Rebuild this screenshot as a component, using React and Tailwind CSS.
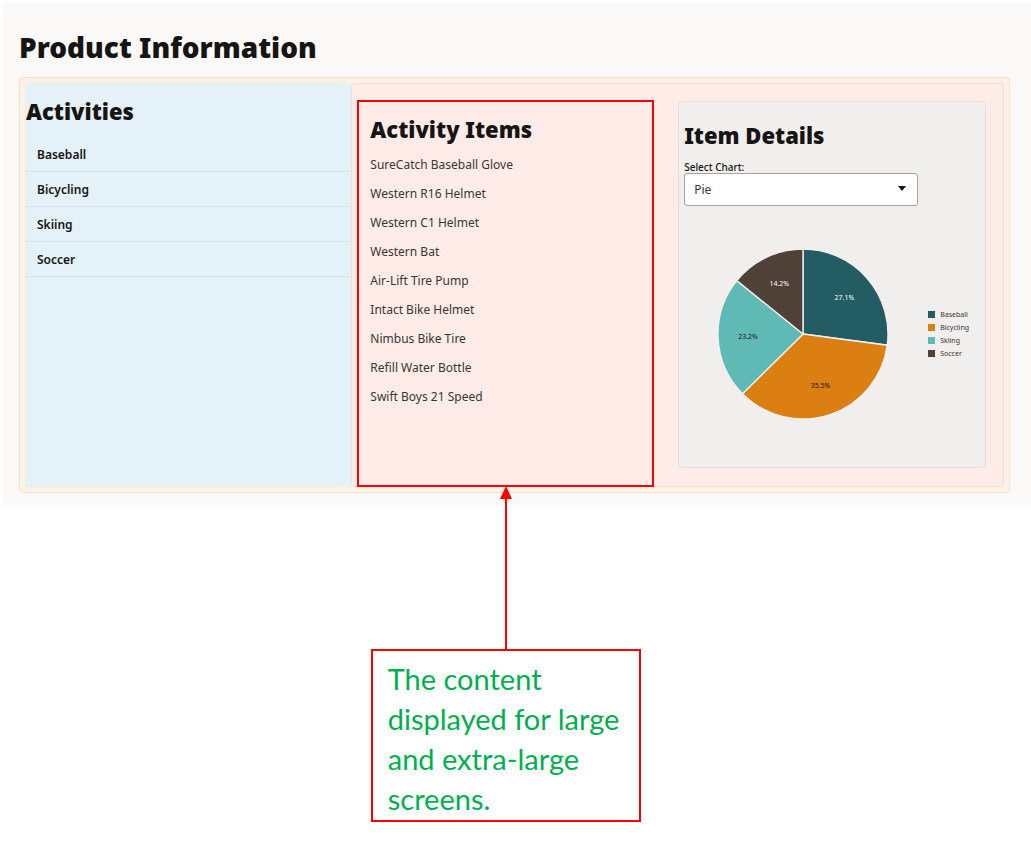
import { useState } from "react";

const activities = ["Baseball", "Bicycling", "Skiing", "Soccer"];

const items = [
  "SureCatch Baseball Glove",
  "Western R16 Helmet",
  "Western C1 Helmet",
  "Western Bat",
  "Air-Lift Tire Pump",
  "Intact Bike Helmet",
  "Nimbus Bike Tire",
  "Refill Water Bottle",
  "Swift Boys 21 Speed",
];

const slices = [
  { name: "Baseball", value: 27.1, color: "#235d63", text: "#ffffff" },
  { name: "Bicycling", value: 35.5, color: "#dc7f12", text: "#161513" },
  { name: "Skiing", value: 23.2, color: "#5fb9b5", text: "#161513" },
  { name: "Soccer", value: 14.2, color: "#4f4137", text: "#ffffff" },
];

const R = 85;

function point(percent, radius) {
  const angle = (percent / 100) * 2 * Math.PI;
  return [R + radius * Math.sin(angle), R - radius * Math.cos(angle)];
}

function PieChart() {
  let start = 0;
  const parts = slices.map((slice) => {
    const from = start;
    start += slice.value;
    const [x1, y1] = point(from, R);
    const [x2, y2] = point(start, R);
    const [tx, ty] = point(from + slice.value / 2, 55);
    return { ...slice, tx, ty, d: `M${R} ${R} L${x1} ${y1} A${R} ${R} 0 0 1 ${x2} ${y2} Z` };
  });

  return (
    <svg className="size-[170px] shrink-0" viewBox="0 0 170 170">
      {parts.map((p) => (
        <path key={p.name} d={p.d} fill={p.color} stroke="#f1efed" strokeWidth="1.4" />
      ))}
      {parts.map((p) => (
        <text key={p.name} x={p.tx} y={p.ty + 2} fill={p.text} fontSize="7" textAnchor="middle">
          {p.value}%
        </text>
      ))}
    </svg>
  );
}

function Activities() {
  return (
    <section className="bg-[#e4f1f7]">
      <h2 className="pt-3 pl-px text-[22px] leading-8 font-black">Activities</h2>
      <ul className="mt-[10px]">
        {activities.map((name) => (
          <li key={name} className="h-[35px] border-b border-[#d5e3ec] pl-3 text-[12px] leading-9 font-semibold">
            {name}
          </li>
        ))}
      </ul>
    </section>
  );
}

function Callout() {
  return (
    <div className="absolute top-full left-1/2 flex w-[270px] -translate-x-1/2 flex-col items-center">
      <svg className="h-[164px] w-[14px]" viewBox="0 0 14 164">
        <path d="M7 1 L13 14 L1 14 Z" fill="#ff0000" />
        <rect x="6" y="12" width="2" height="152" fill="#ff0000" />
      </svg>
      <p className="w-full border-2 border-[#ff0000] bg-white px-[15px] pt-2 pb-px font-[Lato,sans-serif] text-[29px] leading-[40px] text-[#00b050]">
        The content displayed for large and extra-large screens.
      </p>
    </div>
  );
}

function ActivityItems() {
  return (
    <section className="relative -mb-px border-2 border-[#ff0000] px-[11px] pt-[11px]">
      <h2 className="text-[22px] leading-8 font-black">Activity Items</h2>
      <ul className="mt-[5px] text-[12px] leading-[29px] text-[#3a3632]">
        {items.map((item) => (
          <li key={item}>{item}</li>
        ))}
      </ul>
      <Callout />
    </section>
  );
}

function ItemDetails() {
  const [chart, setChart] = useState("Pie");

  return (
    <section className="mt-px mb-[18px] rounded-[4px] border border-[#e2dfdc] bg-[#f1efed] px-[5px] pt-[17px] pb-[48px]">
      <h2 className="text-[22px] leading-8 font-black">Item Details</h2>
      <label htmlFor="chart" className="mt-[10px] block text-[10px] leading-3 font-medium">
        Select Chart:
      </label>
      <div className="relative w-[234px]">
        <select
          id="chart"
          value={chart}
          onChange={(e) => setChart(e.target.value)}
          className="block h-[33px] w-full appearance-none rounded-[3px] border border-[#a5a19d] bg-white px-[9px] text-[12px] text-[#3a3632]"
        >
          <option>Pie</option>
          <option>Bar</option>
        </select>
        <svg className="pointer-events-none absolute top-[13px] right-3 h-[5px] w-2" viewBox="0 0 8 5">
          <path d="M0 0 H8 L4 5 Z" fill="#161513" />
        </svg>
      </div>
      <div className="mt-[43px] flex items-center gap-10 pl-[34px]">
        <PieChart />
        <ul className="text-[7px] leading-[13px] text-[#3a3632]">
          {slices.map((s) => (
            <li key={s.name} className="flex items-center gap-[5px]">
              <span className="size-[7px]" style={{ backgroundColor: s.color }} />
              {s.name}
            </li>
          ))}
        </ul>
      </div>
    </section>
  );
}

function App() {
  return (
    <main className="min-h-screen bg-white pt-[3px] pl-[3px] font-['Noto_Sans',sans-serif] text-[#161513]">
      <div className="bg-[#faf9f8] pt-[23px] pr-[21px] pb-3 pl-4">
        <h1 className="text-[28px] leading-[42px] font-black">Product Information</h1>
        <div className="mt-[9px] grid grid-cols-[1fr_2fr] rounded-[4px] border border-[#f3e1d0] bg-[#fff2e4] p-[5px]">
          <Activities />
          <div className="grid grid-cols-[297fr_308fr] gap-6 rounded-[4px] border border-[#f6dcd9] bg-[#ffebe8] pt-4 pr-[17px] pl-[5px]">
            <ActivityItems />
            <ItemDetails />
          </div>
        </div>
      </div>
    </main>
  );
}

export default App;
